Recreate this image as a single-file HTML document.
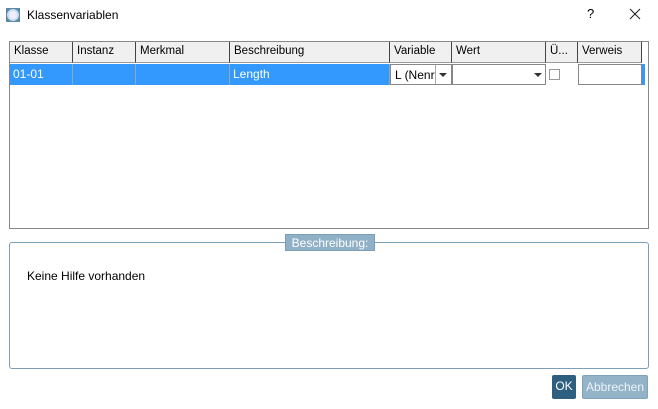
<!DOCTYPE html>
<html><head><style>
*{box-sizing:border-box;margin:0;padding:0}
body{width:658px;height:409px;background:#fff;font-family:"Liberation Sans",sans-serif;font-size:12px;color:#000;position:relative;overflow:hidden}
.a{position:absolute}
.h{position:absolute;top:42px;height:21px;background:#f0f0f0;border-right:1px solid #444;border-bottom:1px solid #999;padding:3px 0 0 4px;font-size:11.5px}
.c{position:absolute;top:64px;height:21px;padding:3px 0 0 3px;color:#fff;background:#3399ff;border-right:1px solid #8ab}
.tri{position:absolute;width:0;height:0;border-left:4px solid transparent;border-right:4px solid transparent;border-top:4px solid #333}
</style></head><body>
<div class="a" style="left:6px;top:8px;width:14px;height:14px;background:#5a8aa5;"></div>
<div class="a" style="left:7px;top:9px;width:12px;height:12px;border-radius:50%;background:#eef;border:2px solid #cde"></div>
<div class="a" style="left:27px;top:8px;font-size:12px">Klassenvariablen</div>
<div class="a" style="left:587px;top:6px;font-size:13px">?</div>
<svg class="a" style="left:629px;top:8px" width="12" height="12"><path d="M1 1L11 11M11 1L1 11" stroke="#222" stroke-width="1.1"/></svg>

<div class="a" style="left:9px;top:41px;width:640px;height:188px;border:1px solid #888"></div>
<div class="h" style="left:10px;width:63px">Klasse</div>
<div class="h" style="left:73px;width:63px">Instanz</div>
<div class="h" style="left:136px;width:94px">Merkmal</div>
<div class="h" style="left:230px;width:160px">Beschreibung</div>
<div class="h" style="left:390px;width:62px">Variable</div>
<div class="h" style="left:452px;width:94px">Wert</div>
<div class="h" style="left:546px;width:32px">Ü...</div>
<div class="h" style="left:578px;width:64px">Verweis</div>
<div class="c" style="left:10px;width:63px">01-01</div>
<div class="c" style="left:73px;width:63px"></div>
<div class="c" style="left:136px;width:94px"></div>
<div class="c" style="left:230px;width:160px">Length</div>
<div class="a" style="left:390px;top:64px;width:62px;height:21px;border:1px solid #888;padding:3px 0 0 4px">L (Nenr</div>
<div class="a" style="left:435px;top:65px;width:1px;height:19px;background:#aaa"></div>
<div class="tri" style="left:439px;top:73px"></div>
<div class="a" style="left:452px;top:64px;width:94px;height:21px;border:1px solid #888"></div>
<div class="tri" style="left:534px;top:73px"></div>
<div class="a" style="left:549px;top:69px;width:11px;height:11px;border:1px solid #999"></div>
<div class="a" style="left:578px;top:64px;width:64px;height:21px;border:1px solid #888"></div>
<div class="a" style="left:642px;top:64px;width:3px;height:21px;background:#3399ff"></div>

<div class="a" style="left:9px;top:242px;width:640px;height:127px;border:1px solid #7c9fb5;border-radius:3px"></div>
<div class="a" style="left:285px;top:234px;width:90px;height:17px;background:#8fb0c6;border:1px solid #7c9fb5;color:#fff;font-size:12px;text-align:center;padding-top:1px">Beschreibung:</div>
<div class="a" style="left:27px;top:269px">Keine Hilfe vorhanden</div>

<div class="a" style="left:552px;top:375px;width:24px;height:24px;background:#2f5f80;border-radius:2px;color:#fff;text-align:center;padding-top:4px">OK</div>
<div class="a" style="left:582px;top:375px;width:66px;height:24px;background:#93b3c9;border:1px solid #7fa3bb;border-radius:2px;color:#eef4f8;text-align:center;padding-top:4px">Abbrechen</div>
</body></html>
